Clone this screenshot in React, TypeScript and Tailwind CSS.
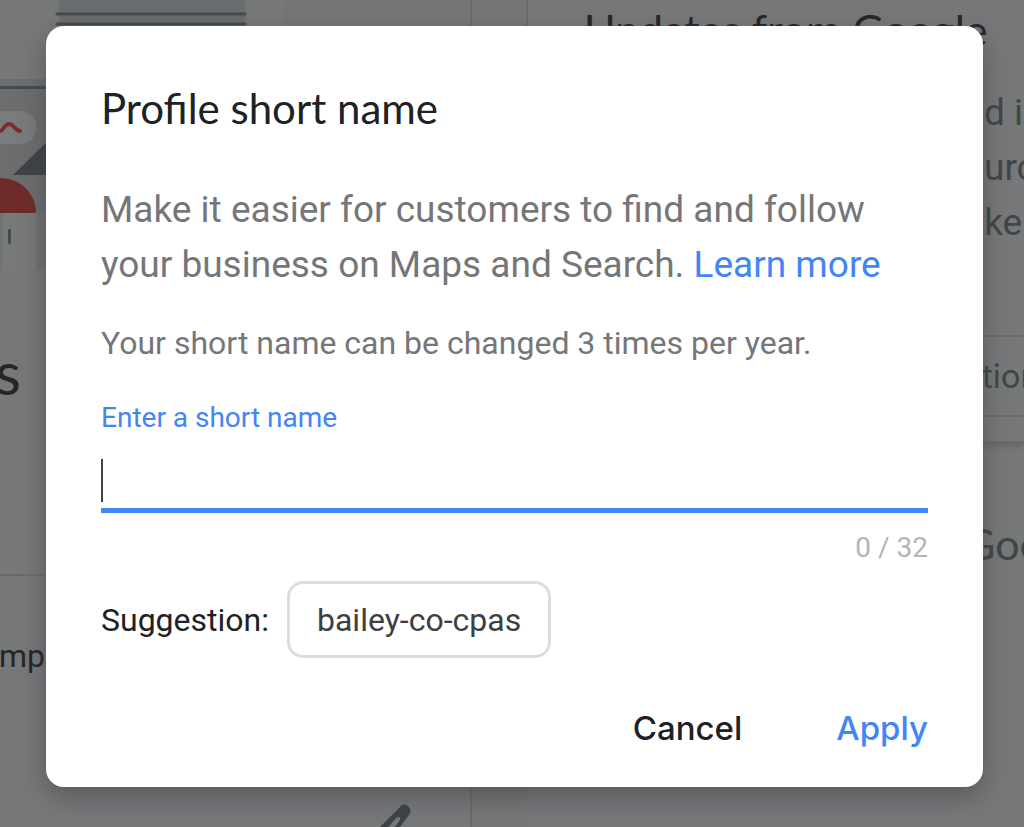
import React, { useState } from "react";

const MAX_LENGTH = 32;

// storefront drawing at the top of the profile card
const StorefrontArt = () => (
  <svg
    className="block h-[270px] w-[471px] max-w-none shrink-0"
    viewBox="0 0 471 270"
    fill="none"
    aria-hidden="true"
  >
    <rect x="59" y="0" width="186" height="32" fill="#6b6c6e" />
    <path d="M57 14H245M57 24H245" stroke="#454c4e" strokeWidth="3" strokeLinecap="round" />
    <rect x="285" y="0" width="186" height="32" fill="#757678" />
    <rect x="0" y="79" width="60" height="134" fill="#6c6d6f" />
    <path d="M0 87.500H60" stroke="#454c4e" strokeWidth="3" />
    <path d="M0 111H20a16.500 16.500 0 0 1 0 33H0z" fill="#7a7b7d" />
    <path
      d="M0 131c4 0 4-7 9-7s5 6 11 7"
      stroke="#7b2e2c"
      strokeWidth="4"
      strokeLinecap="round"
    />
    <path d="M13 175L60 129V175z" fill="#3c4446" />
    <path d="M0 178c20 0 36 15 36 35H0z" fill="#6f2b29" />
    <rect x="0" y="213" width="60" height="57" fill="#717274" />
    <rect x="2" y="213" width="34" height="57" fill="#78797b" />
    <rect x="8" y="229" width="3" height="15" rx="1" fill="#454c4e" />
  </svg>
);

const PencilIcon = () => (
  <svg className="h-[44px] w-[44px]" viewBox="0 0 44 44" fill="none" aria-hidden="true">
    <path
      fillRule="evenodd"
      d="M0 27L24 3c2-3 5-3 8-1 3 3 3 6 1 9L8 44H-12zM5 32l4 4L24 16c1-3-2-4-4-2z"
      fill="#3c4446"
    />
  </svg>
);

const ProfilePage = () => (
  <div
    className="flex h-screen overflow-hidden bg-[#77787a] font-['Roboto',sans-serif] text-[#3f4746]"
    aria-hidden="true"
  >
    <div className="flex w-[472px] shrink-0 flex-col overflow-hidden border-r-2 border-[#6a6b6d]">
      <StorefrontArt />
      <div className="flex h-[306px] shrink-0 border-b-2 border-[#6a6b6d] pt-[70px]">
        <div className="flex w-[21px] justify-end font-['Lato',sans-serif] text-[60px] leading-[64px] text-[#242628]">
          <span>s</span>
        </div>
      </div>
      <div className="pt-[56px]">
        <div className="flex w-[45px] justify-end text-[32px] leading-[48px] text-[#242628]">
          <span>mp</span>
        </div>
      </div>
      <div className="flex justify-end pt-[124px] pr-[50px]">
        <PencilIcon />
      </div>
    </div>

    <div className="w-[54px] shrink-0 bg-[#757678]" />

    <div className="min-w-0 flex-1 overflow-hidden whitespace-nowrap">
      <div className="h-[444px] border-b-3 border-l-2 border-[#6a6b6d] shadow-md">
        <h2 className="pl-[56px] font-['Lato',sans-serif] text-[43px] leading-[60px] text-[#242628]">
          Updates from Google
        </h2>
        <div className="flex h-[275px] flex-col pt-[25px] pl-[456px] text-[37px] leading-[55px]">
          <span>d i</span>
          <span>urc</span>
          <span className="-ml-5">ake</span>
        </div>
        <div className="border-y-2 border-[#6a6b6d] py-[15px] pl-[454px] font-['Inter',sans-serif] text-[33px] leading-[48px]">
          tion
        </div>
      </div>
      <div className="pt-[70px] pl-[438px] font-['Lato',sans-serif] text-[43px] leading-[60px]">
        Google
      </div>
    </div>
  </div>
);

export default function App() {
  const [name, setName] = useState("");

  return (
    <div className="relative min-h-screen">
      <ProfilePage />

      <div className="absolute inset-0 pt-[26px] pr-[41px] pl-[46px]">
        <form
          role="dialog"
          aria-labelledby="dialog-title"
          onSubmit={(e) => e.preventDefault()}
          className="flex flex-col rounded-[18px] bg-white px-[55px] pt-14 pb-[35px] font-['Roboto',sans-serif] shadow-[0_10px_26px_0_rgba(60,60,62,0.5)]"
        >
          <h1
            id="dialog-title"
            className="font-['Lato',sans-serif] text-[42px] leading-[52px] text-[#202124]"
          >
            Profile short name
          </h1>

          <p className="mt-12 text-[37px] leading-[55px] text-[#757678]">
            Make it easier for customers to find and follow your business on Maps and Search.{" "}
            <a href="#" className="text-[#4285f4]">
              Learn more
            </a>
          </p>

          <p className="mt-[27px] text-[32px] leading-[48px] text-[#757678]">
            Your short name can be changed 3 times per year.
          </p>

          <label
            htmlFor="short-name"
            className="mt-[31px] text-[28px] leading-[40px] text-[#4285f4]"
          >
            Enter a short name
          </label>
          <div className="relative">
            <input
              id="short-name"
              type="text"
              maxLength={MAX_LENGTH}
              value={name}
              onChange={(e) => setName(e.target.value)}
              className="peer block h-[75px] w-full border-b-5 border-[#4285f4] text-[32px] text-[#3c4043] outline-none"
            />
            {/* resting caret */}
            {name === "" && (
              <span className="absolute top-[21px] left-0 h-[43px] w-[2px] bg-[#3c4446] peer-focus:hidden" />
            )}
          </div>
          <div className="mt-[15px] text-right text-[28px] leading-[40px] text-[#b4b5b7]">
            {name.length} / {MAX_LENGTH}
          </div>

          <div className="mt-[13px] flex items-center gap-[18px] text-[32px] leading-[48px] text-[#202124]">
            <span>Suggestion:</span>
            <button
              type="button"
              onClick={() => setName("bailey-co-cpas")}
              className="h-[77px] rounded-[16px] border-3 border-[#dadce3] px-[27px] text-[#3c4043]"
            >
              bailey-co-cpas
            </button>
          </div>

          <div className="mt-[46px] flex justify-end gap-[94px] font-['Inter',sans-serif] text-[33px] leading-[48px] font-medium">
            <button type="button" className="text-[#202124]">
              Cancel
            </button>
            <button type="submit" className="text-[#4285f4]">
              Apply
            </button>
          </div>
        </form>
      </div>
    </div>
  );
}
